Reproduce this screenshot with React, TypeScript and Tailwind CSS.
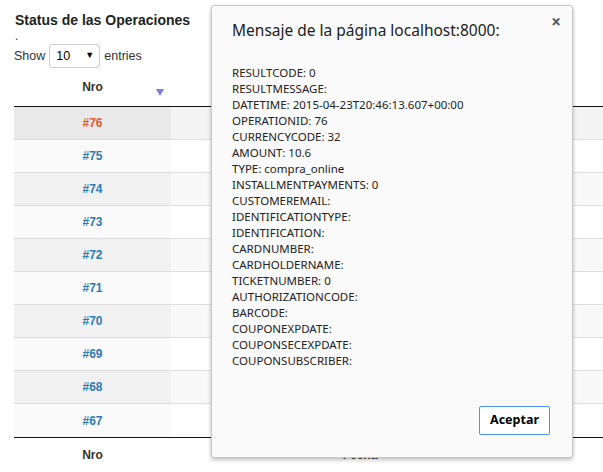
import React from "react";

const ROWS = [76, 75, 74, 73, 72, 71, 70, 69, 68, 67];

const LINES = [
  "RESULTCODE: 0",
  "RESULTMESSAGE:",
  "DATETIME: 2015-04-23T20:46:13.607+00:00",
  "OPERATIONID: 76",
  "CURRENCYCODE: 32",
  "AMOUNT: 10.6",
  "TYPE: compra_online",
  "INSTALLMENTPAYMENTS: 0",
  "CUSTOMEREMAIL:",
  "IDENTIFICATIONTYPE:",
  "IDENTIFICATION:",
  "CARDNUMBER:",
  "CARDHOLDERNAME:",
  "TICKETNUMBER: 0",
  "AUTHORIZATIONCODE:",
  "BARCODE:",
  "COUPONEXPDATE:",
  "COUPONSECEXPDATE:",
  "COUPONSUBSCRIBER:",
];

function rowColors(i: number) {
  // first row is hovered, then odd/even striping like DataTables
  if (i === 0) return { sort: "bg-[#e9e9e9]", rest: "bg-[#f4f4f4]" };
  if (i % 2 === 0) return { sort: "bg-[#f1f1f1]", rest: "bg-[#f9f9f9]" };
  return { sort: "bg-[#fafafa]", rest: "bg-white" };
}

function OperationsTable() {
  return (
    <div className="w-[760px] text-[12px] text-[#333]">
      <div className="flex h-[36px] items-center border-b border-[#111]">
        <div className="relative flex h-full w-[157px] items-center justify-center pb-[3px] font-bold">
          Nro
          <span className="absolute right-[7px] top-[18px] h-0 w-0 border-x-[4px] border-t-[7px] border-x-transparent border-t-[#7b7be0]" />
        </div>
        <div className="flex h-full w-[378px] items-center justify-center pb-[3px] font-bold">
          Fecha
        </div>
        <div className="flex-1" />
      </div>
      {ROWS.map((n, i) => {
        const c = rowColors(i);
        return (
          <div
            key={n}
            className={`flex h-[33px] ${i < ROWS.length - 1 ? "border-b border-[#ddd]" : ""}`}
          >
            <div className={`flex w-[157px] items-center justify-center font-bold ${c.sort}`}>
              <span className={i === 0 ? "text-[#e05a30]" : "text-[#2c7bb4]"}>#{n}</span>
            </div>
            <div className={`flex-1 ${c.rest}`} />
          </div>
        );
      })}
      <div className="flex h-[35px] items-start border-t border-[#111] pt-[8px]">
        <div className="flex w-[157px] justify-center font-bold">Nro</div>
        <div className="flex w-[378px] justify-center font-bold">Fecha</div>
      </div>
    </div>
  );
}

function AlertDialog() {
  return (
    <div
      className="absolute left-[211px] top-[5px] flex h-[453px] w-[362px] flex-col rounded-[3px] border border-[#c6c6c6] bg-[#fafafa] shadow-[0_2px_4px_rgba(0,0,0,0.25)]"
      style={{ fontFamily: '"Noto Sans", "Open Sans", sans-serif' }}
    >
      <div className="relative px-5 pt-[13px]">
        <div className="text-[15.5px] leading-[22px] text-[#222]">
          Mensaje de la página localhost:8000:
        </div>
        <span className="absolute right-[11px] top-[7px] text-[17px] font-bold leading-none text-[#5a5a5a]">
          ×
        </span>
      </div>
      <div className="px-5 pt-[24px] text-[11.5px] leading-[16px] text-[#222]">
        {LINES.map((l) => (
          <div key={l}>{l}</div>
        ))}
      </div>
      <div className="mt-auto flex justify-end px-[22px] pb-[22px]">
        <button
          type="button"
          className="h-[29px] w-[71px] rounded-[2px] border border-[#4d90fe] bg-white text-[12.5px] font-bold text-black"
        >
          Aceptar
        </button>
      </div>
    </div>
  );
}

export default function App() {
  return (
    <div
      className="relative h-[472px] w-[603px] overflow-hidden bg-white text-[#333]"
      style={{ fontFamily: '"Liberation Sans", Arial, sans-serif' }}
    >
      <div className="pl-[14px] pt-[10px]">
        <h1 className="pl-[1px] text-[14px] font-bold leading-[20px] text-[#222]">
          Status de las Operaciones
        </h1>
        <div className="pl-[1px] text-[12px] leading-[12px]">.</div>
        <div className="mt-[2px] flex h-[24px] items-center gap-[4px] text-[12.5px]">
          <span>Show</span>
          <div className="flex h-[24px] w-[51px] items-center justify-between rounded-[3px] border border-[#ccc] bg-white pl-[6px] pr-[5px] text-[12.5px] text-black">
            10
            <span className="text-[9px]">▼</span>
          </div>
          <span>entries</span>
        </div>
        <div className="mt-[3px]">
          <OperationsTable />
        </div>
      </div>
      <AlertDialog />
    </div>
  );
}
